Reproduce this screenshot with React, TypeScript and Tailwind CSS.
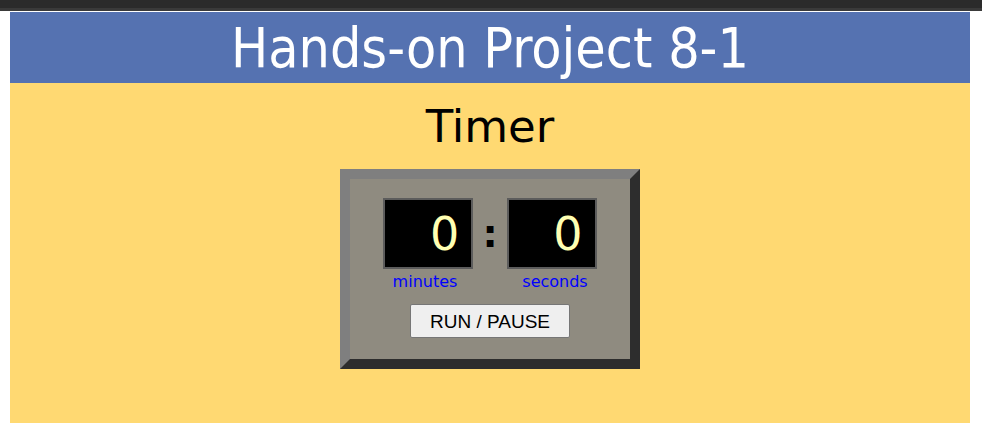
export default function App() {
  return (
    <div className="min-h-[433px] bg-white">
      <div className="h-[8px] bg-[#2b2b2b]" />
      <div className="h-[3px] bg-[#3a3a3a]" />
      <div className="ml-[10px] w-[960px] pt-px">
        <header className="flex h-[71px] items-center justify-center bg-[#5572b1]">
          <h1
            className="mt-[2px] text-[55px] leading-none text-white"
            style={{ fontFamily: '"DejaVu Sans Condensed", "DejaVu Sans", sans-serif' }}
          >
            Hands-on Project 8-1
          </h1>
        </header>
        <main className="flex h-[340px] flex-col items-center bg-[#ffd972]">
          <h2
            className="mt-[18px] text-[45px] leading-[52px] text-black"
            style={{ fontFamily: '"DejaVu Sans", Verdana, sans-serif' }}
          >
            Timer
          </h2>
          <div className="mt-[16px] h-[200px] w-[300px] border-[10px] border-t-[#7f7f7f] border-l-[#7f7f7f] border-b-[#2d2d2d] border-r-[#2d2d2d] bg-[#8f8b80]">
            <div className="flex items-center justify-center pt-[19px]">
              <TimeBox value="0" />
              <span
                className="mx-[9px] text-[38px] font-bold leading-none text-black"
                style={{ fontFamily: '"DejaVu Sans", sans-serif' }}
              >
                :
              </span>
              <TimeBox value="0" />
            </div>
            <div
              className="mt-[3px] flex justify-center gap-[50px] text-[16px] leading-[20px] text-[#0000ff]"
              style={{ fontFamily: '"DejaVu Sans", Verdana, sans-serif' }}
            >
              <span className="w-[80px] text-center">minutes</span>
              <span className="w-[80px] text-center">seconds</span>
            </div>
            <div className="mt-[12px] flex justify-center">
              <button
                type="button"
                className="h-[34px] w-[160px] rounded-[2px] border border-[#767676] bg-[#efefef] text-[19px] leading-none text-black"
                style={{ fontFamily: '"Liberation Sans", Arial, sans-serif' }}
              >
                RUN / PAUSE
              </button>
            </div>
          </div>
        </main>
      </div>
    </div>
  );
}

function TimeBox({ value }: { value: string }) {
  return (
    <div
      className="flex h-[71px] w-[90px] items-center justify-end border-2 border-[#5c5c5c] bg-black pr-[12px] text-[46px] leading-none text-[#ffffb3]"
      style={{ fontFamily: '"DejaVu Sans", Verdana, sans-serif' }}
    >
      {value}
    </div>
  );
}
